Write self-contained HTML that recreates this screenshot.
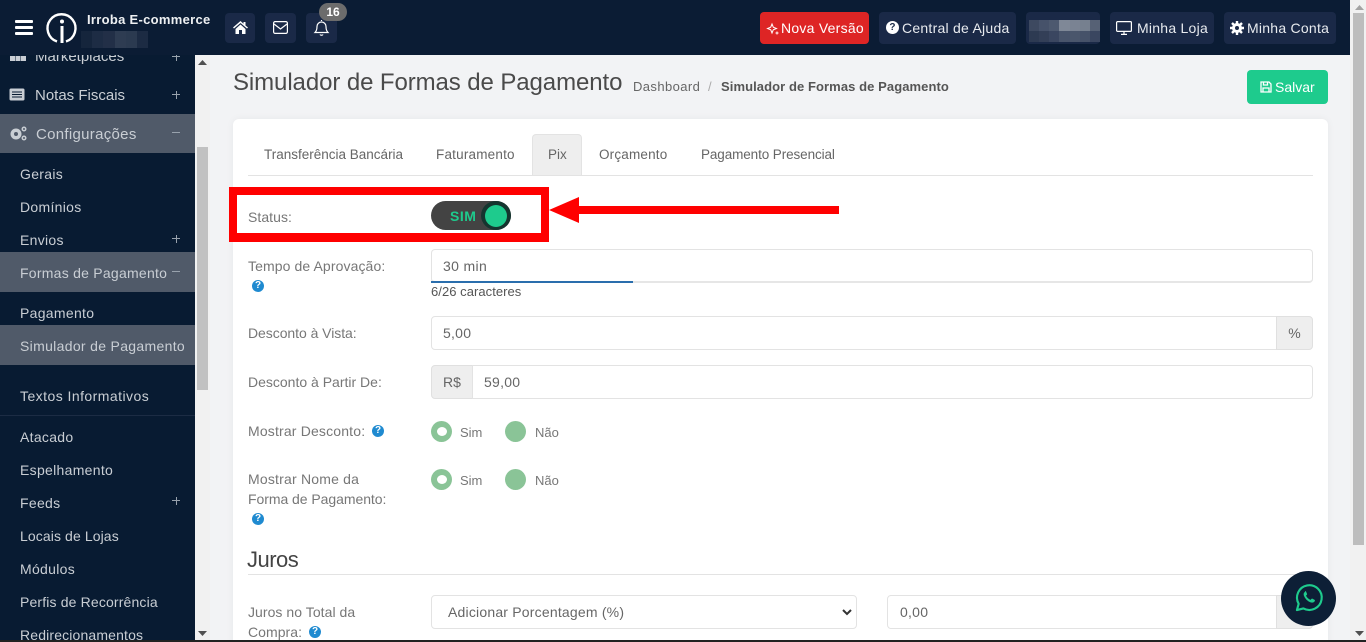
<!DOCTYPE html>
<html lang="pt-BR"><head><meta charset="utf-8"><title>Simulador de Formas de Pagamento</title>
<style>
html,body{margin:0;padding:0;width:1366px;height:642px;overflow:hidden;background:#f2f3f5}
body{font-family:"Liberation Sans",sans-serif;font-size:14px;color:#555;position:relative}
.a,.t,.s,.l,.b{position:absolute;white-space:nowrap}
.t{line-height:20px;height:20px}
.s{left:20px;line-height:20px;color:#c9ced4;letter-spacing:.3px}
.l{left:248px;line-height:20px;color:#777;letter-spacing:.05px}
.b{background:#1a2947;border-radius:4px;height:32px;top:12px;color:#e8ebef;line-height:32px;letter-spacing:.25px}
.inp{position:absolute;background:#fff;border:1px solid #e3e3e3;border-radius:4px;box-sizing:border-box;line-height:32px;padding-left:11px;color:#666;letter-spacing:.25px}
.add{position:absolute;background:#eee;border:1px solid #e0e0e0;box-sizing:border-box;text-align:center;line-height:32px;color:#666}
.r{position:absolute;width:21px;height:21px;border-radius:50%;background:#8ac497}
.r.on::after{content:"";position:absolute;left:6px;top:6px;width:10px;height:9px;border-radius:50%;background:#fff}
.q{position:absolute;width:12px;height:12px;border-radius:50%;background:#1f8ad0;color:#fff;font:bold 10px/12px "Liberation Sans",sans-serif;text-align:center}
.tab{position:absolute;top:145px;line-height:20px;color:#666;font-size:13.5px}
.pm{position:absolute;left:172px;width:8px;height:1px;background:#98a2ad}
.pm.p::after{content:"";position:absolute;left:3.5px;top:-3.5px;width:1px;height:8px;background:#98a2ad}
.px{position:absolute;display:grid}
.px i{display:block}
svg{position:absolute;overflow:visible}
</style></head><body>

<!-- main card -->
<div class="a" style="left:233px;top:119px;width:1095px;height:530px;background:#fff;border-radius:6px;box-shadow:0 0 8px rgba(0,0,0,.05)"></div>

<!-- page title -->
<div class="a" style="left:233px;top:68px;font-size:24px;line-height:30px;color:#4a4a4a;letter-spacing:-.09px">Simulador de Formas de Pagamento</div>
<div class="a" style="left:633px;top:77px;font-size:13px;line-height:20px;color:#666;letter-spacing:.4px">Dashboard</div>
<div class="a" style="left:708px;top:77px;font-size:13px;line-height:20px;color:#aaa">/</div>
<div class="a" style="left:721px;top:77px;font-size:13px;line-height:20px;color:#555;font-weight:bold;letter-spacing:.08px">Simulador de Formas de Pagamento</div>
<div class="a" style="left:1247px;top:70px;width:81px;height:34px;background:#1ecb8d;border-radius:4px;color:#fff;line-height:34px">
 <svg style="left:13px;top:11px" width="12" height="12" viewBox="0 0 12 12" fill="none" stroke="#fff" stroke-width="1.3"><path d="M1 1h8l2 2v8H1zM3.5 1v3h4V1M3 11V7h6v4"/></svg>
 <span class="a" style="left:28px">Salvar</span></div>

<!-- tabs -->
<div class="t tab" style="left:264px;letter-spacing:0">Transferência Bancária</div>
<div class="t tab" style="left:436px;letter-spacing:.2px">Faturamento</div>
<div class="a" style="left:532px;top:134px;width:50px;height:42px;background:#eee;border:1px solid #e3e3e3;border-bottom:0;border-radius:4px 4px 0 0;box-sizing:border-box"></div>
<div class="t tab" style="left:548px">Pix</div>
<div class="t tab" style="left:599px;letter-spacing:.18px">Orçamento</div>
<div class="t tab" style="left:701px;letter-spacing:-.1px">Pagamento Presencial</div>
<div class="a" style="left:248px;top:175px;width:1065px;height:1px;background:#e3e3e3"></div>

<!-- status -->
<div class="a" style="left:229px;top:187px;width:320px;height:55px;border:8px solid #f00;border-bottom-width:9px;box-sizing:border-box"></div>
<div class="l" style="top:207px">Status:</div>
<div class="a" style="left:431px;top:201px;width:80px;height:29px;border-radius:15px;background:#434343"></div>
<div class="a" style="left:450px;top:206px;line-height:20px;font-weight:bold;color:#1ecb8d;letter-spacing:.5px">SIM</div>
<div class="a" style="left:481px;top:201px;width:30px;height:29px;border-radius:50%;background:#15352f"></div>
<div class="a" style="left:485px;top:205px;width:22px;height:22px;border-radius:50%;background:#1ecb8d"></div>
<svg style="left:0;top:0" width="1" height="1"><path d="M549 210L579 197V206H839V214H579V223z" fill="#f00"/></svg>

<!-- tempo -->
<div class="l" style="top:256px;letter-spacing:.1px">Tempo de Aprovação:</div>
<div class="q" style="left:252px;top:280px">?</div>
<div class="inp" style="left:431px;top:249px;width:882px;height:34px;border-bottom:2px solid #e6e6e6;letter-spacing:.35px">30 min</div>
<div class="a" style="left:431px;top:281px;width:202px;height:2px;background:#2a6ead"></div>
<div class="a" style="left:431px;top:283px;font-size:13px;line-height:18px;color:#555;letter-spacing:.05px">6/26 caracteres</div>

<!-- desconto -->
<div class="l" style="top:323px;letter-spacing:-.05px">Desconto à Vista:</div>
<div class="inp" style="left:431px;top:316px;width:846px;height:34px;border-radius:4px 0 0 4px">5,00</div>
<div class="add" style="left:1276px;top:316px;width:37px;height:34px;border-radius:0 4px 4px 0">%</div>

<div class="l" style="top:372px;letter-spacing:0">Desconto à Partir De:</div>
<div class="add" style="left:431px;top:365px;width:42px;height:34px;border-radius:4px 0 0 4px">R$</div>
<div class="inp" style="left:472px;top:365px;width:841px;height:34px;border-radius:0 4px 4px 0">59,00</div>

<div class="l" style="top:421px;letter-spacing:.17px">Mostrar Desconto:</div>
<div class="q" style="left:372px;top:425px">?</div>
<div class="r on" style="left:431px;top:421px"></div>
<div class="a" style="left:460px;top:423px;line-height:20px;font-size:13px;color:#777">Sim</div>
<div class="r" style="left:505px;top:421px"></div>
<div class="a" style="left:535px;top:423px;line-height:20px;font-size:13px;color:#777">Não</div>

<div class="l" style="top:469px;letter-spacing:.2px">Mostrar Nome da</div>
<div class="l" style="top:489px;letter-spacing:-.05px">Forma de Pagamento:</div>
<div class="q" style="left:252px;top:513px">?</div>
<div class="r on" style="left:431px;top:469px"></div>
<div class="a" style="left:460px;top:471px;line-height:20px;font-size:13px;color:#777">Sim</div>
<div class="r" style="left:505px;top:469px"></div>
<div class="a" style="left:535px;top:471px;line-height:20px;font-size:13px;color:#777">Não</div>

<div class="a" style="left:247px;top:546px;font-size:22px;line-height:28px;color:#444;letter-spacing:-.5px">Juros</div>
<div class="a" style="left:248px;top:574px;width:1065px;height:1px;background:#e3e3e3"></div>

<div class="l" style="top:602px">Juros no Total da</div>
<div class="l" style="top:622px">Compra:</div>
<div class="q" style="left:309px;top:626px">?</div>
<div class="inp" style="left:431px;top:595px;width:426px;height:34px;padding-left:16px;letter-spacing:.2px">Adicionar Porcentagem (%)</div>
<svg style="left:842px;top:609px" width="10" height="7" viewBox="0 0 10 7" fill="none" stroke="#333" stroke-width="2"><path d="M1 1l4 4 4-4"/></svg>
<div class="inp" style="left:887px;top:595px;width:390px;height:34px;border-radius:4px 0 0 4px;padding-left:12px">0,00</div>
<div class="add" style="left:1276px;top:595px;width:37px;height:34px;border-radius:0 4px 4px 0"></div>

<!-- sidebar -->
<div class="a" style="left:0;top:55px;width:195px;height:587px;background:#081b32;overflow:hidden">
 <div class="s" style="left:35px;top:-8px;font-size:15px;letter-spacing:0">Marketplaces</div>
 <div class="pm p" style="top:1px"></div>
 <svg style="left:10px;top:-3px" width="16" height="9" viewBox="0 0 16 9" fill="#c9ced4"><path d="M4 0h8l1 3H3zM0 4h5v5H0zM5.500 4h5v5h-5zM11 4h5v5h-5z"/></svg>

 <svg style="left:9px;top:33px" width="16" height="13" viewBox="0 0 16 13"><rect x=".5" y=".5" width="15" height="12" rx="1.500" fill="#c9ced4"/><path d="M3 4h10M3 6.500h10M3 9h10" stroke="#081b32" stroke-width="1"/></svg>
 <div class="s" style="left:35px;top:31px;font-size:15px;letter-spacing:0">Notas Fiscais</div>
 <div class="pm p" style="top:39px"></div>

 <div class="a" style="left:0;top:59px;width:195px;height:39px;background:#505a69"></div>
 <svg style="left:10px;top:71px" width="17" height="15" viewBox="0 0 17 15" fill="#c9ced4"><circle cx="6" cy="8" r="5.500"/><circle cx="6" cy="8" r="2" fill="#505a69"/><circle cx="14" cy="3" r="2.500"/><circle cx="14" cy="3" r="1" fill="#505a69"/><circle cx="14" cy="12" r="2.500"/><circle cx="14" cy="12" r="1" fill="#505a69"/></svg>
 <div class="s" style="left:36px;top:70px;font-size:15px">Configurações</div>
 <div class="pm" style="top:77px"></div>

 <div class="s" style="top:109px">Gerais</div>
 <div class="s" style="top:142px">Domínios</div>
 <div class="s" style="top:175px">Envios</div>
 <div class="pm p" style="top:183px"></div>
 <div class="a" style="left:0;top:197px;width:195px;height:40px;background:#505a69"></div>
 <div class="s" style="top:208px;letter-spacing:.25px">Formas de Pagamento</div>
 <div class="pm" style="top:216px"></div>
 <div class="s" style="top:248px">Pagamento</div>
 <div class="a" style="left:0;top:270px;width:195px;height:40px;background:#505a69"></div>
 <div class="s" style="top:281px;letter-spacing:.32px">Simulador de Pagamento</div>
 <div class="s" style="top:331px;letter-spacing:.45px">Textos Informativos</div>
 <div class="a" style="left:0;top:360px;width:195px;height:1px;background:#1c2c44"></div>
 <div class="s" style="top:372px">Atacado</div>
 <div class="s" style="top:405px">Espelhamento</div>
 <div class="s" style="top:438px">Feeds</div>
 <div class="pm p" style="top:445px"></div>
 <div class="s" style="top:471px;letter-spacing:.1px">Locais de Lojas</div>
 <div class="s" style="top:504px">Módulos</div>
 <div class="s" style="top:537px;letter-spacing:.15px">Perfis de Recorrência</div>
 <div class="s" style="top:570px;letter-spacing:.15px">Redirecionamentos</div>
</div>

<!-- sidebar scrollbar -->
<div class="a" style="left:195px;top:55px;width:15px;height:585px;background:#f1f1f1"></div>
<div class="a" style="left:197px;top:147px;width:11px;height:243px;background:#c1c1c1"></div>
<svg style="left:198px;top:60px" width="9" height="5"><path d="M0 5L4.500 0 9 5z" fill="#505050"/></svg>
<svg style="left:198px;top:631px" width="9" height="5"><path d="M0 0L4.500 5 9 0z" fill="#505050"/></svg>

<!-- header -->
<div class="a" style="left:0;top:0;width:1350px;height:55px;background:#0b1c34"></div>
<div class="a" style="left:15px;top:20px;width:18px;height:3px;background:#fff;border-radius:1px"></div>
<div class="a" style="left:15px;top:26px;width:18px;height:3px;background:#fff;border-radius:1px"></div>
<div class="a" style="left:15px;top:32px;width:18px;height:3px;background:#fff;border-radius:1px"></div>
<svg style="left:46px;top:13px" width="32" height="31" viewBox="0 0 32 31" fill="none" stroke="#fff" stroke-width="2.400"><path d="M11 28.500A14 14 0 1 1 20 28.500"/><circle cx="16" cy="8.500" r="2" fill="#fff" stroke="none"/><path d="M16 13V30" stroke-width="3"/></svg>
<div class="a" style="left:87px;top:10px;font-size:13px;font-weight:bold;line-height:20px;color:#eef0f2;letter-spacing:.3px">Irroba E-commerce</div>
<div class="px" style="left:81px;top:31px;width:67px;height:17px;grid-template-columns:repeat(6,1fr)"><i style="background:#15253c"></i><i style="background:#1d2c44"></i><i style="background:#222f47"></i><i style="background:#2e3c52"></i><i style="background:#2b3a50"></i><i style="background:#1c2b43"></i></div>

<div class="b" style="left:225px;top:13px;width:30px;height:30px"><svg style="left:8px;top:8px" width="15" height="13" viewBox="0 0 15 13" fill="#fff"><path d="M7.500 0L0 6.500l1 1L7.500 2 14 7.500l1-1-2.500-2V1h-2v1.800zM2.500 8v5h3.500V9h3v4h3.500V8L7.500 3.500z"/></svg></div>
<div class="b" style="left:265px;top:13px;width:31px;height:30px"><svg style="left:8px;top:8px" width="15" height="13" viewBox="0 0 15 13" fill="none" stroke="#fff" stroke-width="1.200"><rect x=".6" y=".6" width="13.800" height="11.800" rx="1.500"/><path d="M1 3l6.500 5L14 3"/></svg></div>
<div class="b" style="left:306px;top:13px;width:31px;height:30px"><svg style="left:8px;top:7px" width="15" height="16" viewBox="0 0 15 16" fill="none" stroke="#fff" stroke-width="1.200"><path d="M1 12.500c1.500-1.500 2-3 2-6 0-2.500 2-4.500 4.500-4.500S12 4 12 6.500c0 3 .5 4.500 2 6zM7.500 1V0M6 14.500c.5 1 2.500 1 3 0"/></svg></div>
<div class="a" style="left:319px;top:3px;width:28px;height:18px;border-radius:9px;background:#6c6c6c;color:#fff;font-size:12px;font-weight:bold;line-height:18px;text-align:center">16</div>

<div class="b" style="left:760px;width:109px;background:#de2525;color:#fff">
 <svg style="left:7px;top:10px" width="12" height="13" viewBox="0 0 12 13" fill="none" stroke="#fff" stroke-width="1"><path d="M5 2l1.300 3.200L9.500 6.500 6.300 7.800 5 11 3.700 7.800.5 6.500l3.200-1.300zM10 9.500v3M8.500 11h3"/></svg>
 <span class="a" style="left:21px">Nova Versão</span></div>
<div class="b" style="left:879px;width:137px"><span class="q" style="left:7px;top:9px;width:13px;height:13px;background:#fff;color:#1a2947;line-height:13px">?</span><span class="a" style="left:23px">Central de Ajuda</span></div>
<div class="b" style="left:1026px;width:74px"></div>
<div class="px" style="left:1029px;top:20px;width:71px;height:22px;grid-template-columns:repeat(7,1fr);grid-template-rows:1fr 1fr"><i style="background:#3d4960"></i><i style="background:#46526a"></i><i style="background:#4d596f"></i><i style="background:#7f8897"></i><i style="background:#7a8393"></i><i style="background:#76808f"></i><i style="background:#566175"></i><i style="background:#2d3a52"></i><i style="background:#333f57"></i><i style="background:#3a4660"></i><i style="background:#48546b"></i><i style="background:#4a566c"></i><i style="background:#465269"></i><i style="background:#3a4660"></i></div>
<div class="b" style="left:1110px;width:104px"><svg style="left:6px;top:9px" width="16" height="14" viewBox="0 0 16 14" fill="none" stroke="#fff" stroke-width="1.200"><rect x=".6" y=".6" width="14.800" height="9.800" rx="1"/><path d="M5 13.400h6M8 10.500v3"/></svg><span class="a" style="left:27px">Minha Loja</span></div>
<div class="b" style="left:1224px;width:112px"><svg style="left:6px;top:9px" width="14" height="14" viewBox="0 0 14 14"><circle cx="7" cy="7" r="5" fill="#fff"/><path d="M7 0v14M0 7h14M2 2l10 10M12 2L2 12" stroke="#fff" stroke-width="2.400"/><circle cx="7" cy="7" r="2" fill="#1a2947"/></svg><span class="a" style="left:23px">Minha Conta</span></div>

<!-- page scrollbar -->
<div class="a" style="left:1350px;top:0;width:16px;height:640px;background:#f1f1f1"></div>
<div class="a" style="left:1353px;top:13px;width:11px;height:532px;background:#bdbdbd"></div>
<svg style="left:1355px;top:5px" width="9" height="5"><path d="M0 5L4.500 0 9 5z" fill="#a3a3a3"/></svg>
<svg style="left:1355px;top:631px" width="9" height="5"><path d="M0 0L4.500 5 9 0z" fill="#505050"/></svg>
<div class="a" style="left:0;top:640px;width:1366px;height:2px;background:#222"></div>

<!-- whatsapp -->
<div class="a" style="left:1281px;top:571px;width:55px;height:55px;border-radius:50%;background:#0d1f36"></div>
<svg style="left:1295px;top:584px" width="28" height="28" viewBox="0 0 29 29" fill="none"><path d="M2 27l1.800-6.500A12.800 12.800 0 1 1 8.700 25.300z" stroke="#1ecb8d" stroke-width="2.200" stroke-linejoin="round"/><path d="M10.500 8c-1.500 1-2 2.500-1 4.700 1.200 2.800 3.500 5 6.300 6.200 2.200.8 3.800.3 4.700-1.200.3-.6.200-1-.2-1.300l-2.300-1.200c-.5-.2-.8 0-1.100.4l-.7.9c-2-.7-3.800-2.400-4.800-4.500l.8-.8c.3-.3.4-.7.200-1.100l-1-2.300c-.3-.5-.6-.6-.9-.5z" fill="#1ecb8d"/></svg>

</body></html>
